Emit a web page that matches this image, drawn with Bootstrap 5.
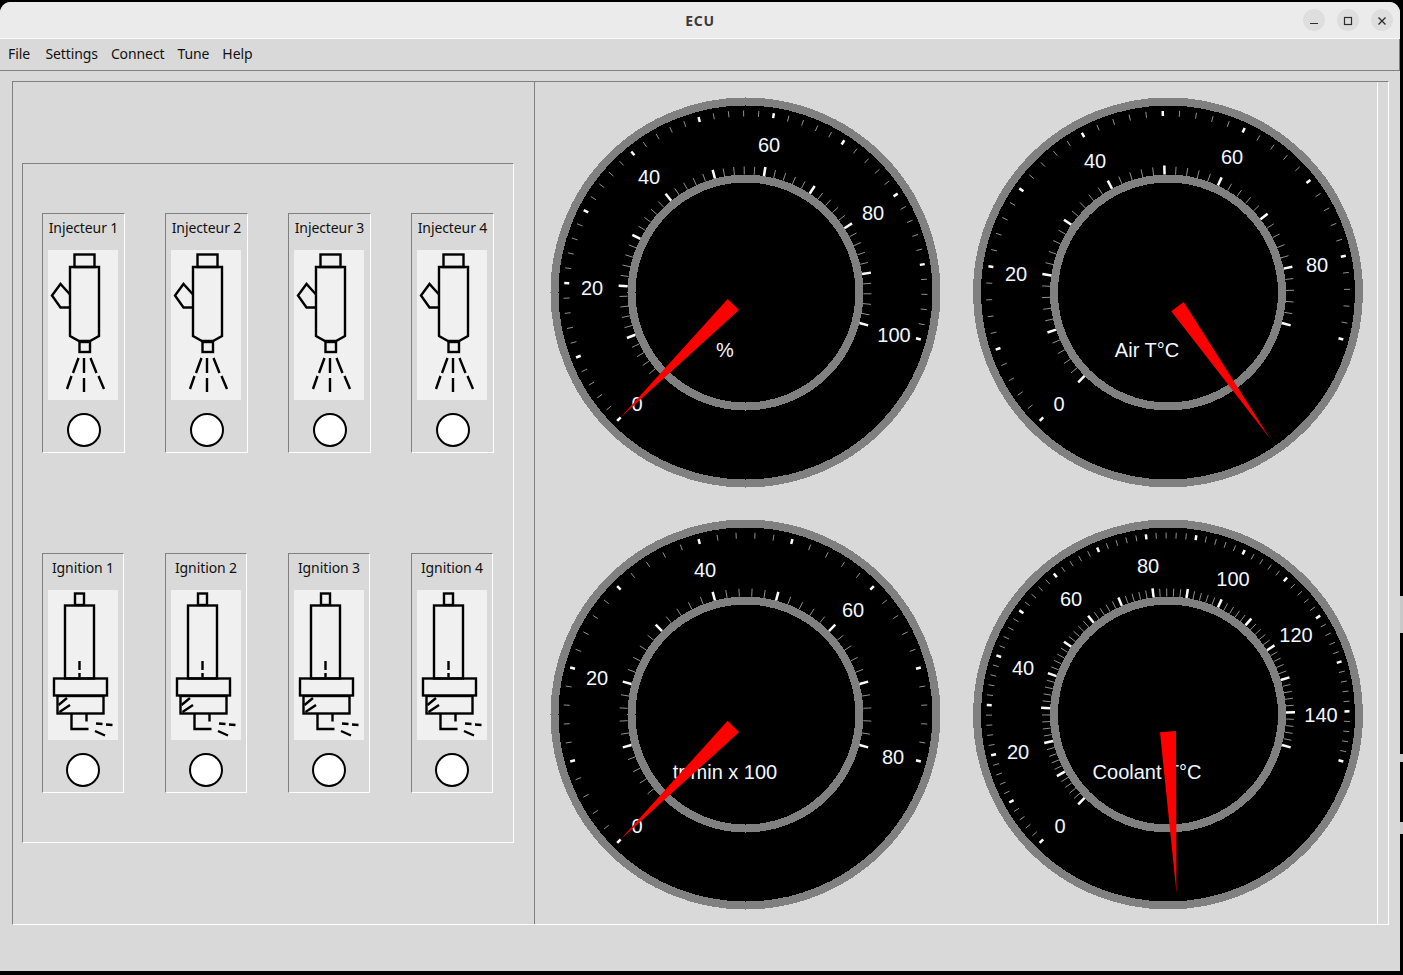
<!DOCTYPE html>
<html lang="en">
<head>
    <meta charset="UTF-8">
    <meta name="viewport" content="width=device-width, initial-scale=1.0">
    <title>ECU</title>
    <link href="https://cdn.jsdelivr.net/npm/bootstrap@5.3.0/dist/css/bootstrap.min.css" rel="stylesheet">
    <style>
        html, body { height: 100%; }
        body { background: #000; font-family: "Noto Sans", sans-serif; font-size: 14px; color: #111; overflow: hidden; }
        .desk { width: 1403px; height: 975px; padding-top: 2px; }
        .app-window { width: 1400px; height: 969px; background: #d9d9d9; border-radius: 11px 11px 0 0; overflow: hidden; }
        .title-bar { height: 37px; background: #ebebeb; border-bottom: 1px solid #f8f8f8; }
        .title-text { left: 0; right: 0; top: 10px; text-align: center; font-weight: 700; font-size: 14px; line-height: 18px; letter-spacing: .7px; color: #3a3a3a; }
        .win-btns { gap: 12px; padding: 7px 7px 0 0; }
        .win-btn { width: 22px; height: 22px; border-radius: 50%; background: #dedede; }
        .menu-row { height: 32px; border-bottom: 1px solid #808080; border-right: 1px solid #808080; padding-left: 8px; gap: 13px; }
        .menu-item { padding: 0; font-size: 14px; line-height: 30px; letter-spacing: -.1px; color: #111; }
        .menu-item:hover { color: #111; }
        .menu-item:first-child { margin-right: 2.4px; }
        .main-frame { width: 1377px; height: 844px; margin: 10px 0 0 12px; border: 1px solid; border-color: #808080 #fff #fff #808080; }
        .left-pane { width: 522px; padding: 81px 0 0 9px; border-right: 1px solid #808080; }
        .io-frame { width: 492px; height: 680px; padding: 49px 0 0 19px; gap: 100px; border: 1px solid; border-color: #808080 #fff #fff #808080; }
        .gap-inj { gap: 40px; }
        .gap-ign { gap: 41px; }
        .io-card { height: 240px; border: 1px solid; border-color: #808080 #fff #fff #808080; }
        .card-inj { width: 83px; }
        .card-ign { width: 82px; }
        .io-label { padding-top: 4px; height: 36px; line-height: 20px; letter-spacing: -.1px; white-space: nowrap; }
        .io-pic { display: block; width: 70px; height: 150px; margin-left: 5px; background: #f0f0f0; }
        .io-lamp { display: block; width: 36px; height: 36px; margin-top: 12px; }
        .card-inj .io-lamp { margin-left: 23px; }
        .card-ign .io-lamp { margin-left: 22px; }
        .gauge-pane { width: 843px; display: grid; grid-template-columns: 421px 421px; grid-template-rows: 421px 421px; border-right: 1px solid #fff; }
        .gauge-pane svg { display: block; width: 421px; height: 421px; }
        .g-face { shape-rendering: crispEdges; fill: #000; stroke: #808080; stroke-width: 8; }
        .g-text { font-family: "Liberation Sans", Arial, sans-serif; font-size: 20px; fill: #f4f8ff; text-anchor: middle; }
        .g-needle { fill: #f00; }
        .tick-major { stroke: #fff; stroke-width: 2.5; }
        .tick-minor { stroke: #a0a0a0; stroke-width: .9; }
        .pic-line { fill: none; stroke: #000; stroke-width: 2.4; }
        .edge-strip { width: 3px; }
        .edge-a, .edge-b, .edge-c { background: #c8c8c8; }
        .edge-a { height: 37px; margin-top: 594px; }
        .edge-b { height: 8px; margin-top: 121px; }
        .edge-c { height: 12px; margin-top: 60px; }
    </style>
</head>
<body>
    <svg width="0" height="0" class="d-block position-absolute">
        <symbol id="pic-injector" viewBox="0 0 70 150">
            <g class="pic-line">
                <rect x="26.5" y="4.5" width="20" height="12.5"/>
                <path d="M22 17H51V86L42 91H31L22 86Z"/>
                <rect x="31.5" y="92" width="10.5" height="10"/>
                <path d="M22 44.5L12.5 34L4 45.5L12.5 57.5H22"/>
                <path d="M36 108V123M36 128V142M30.5 108L25 123M23.5 126L19 139M42.5 108L48.5 123M50.5 126L56 139"/>
            </g>
        </symbol>
        <symbol id="pic-ignition" viewBox="0 0 70 150">
            <g class="pic-line">
                <rect x="27" y="3.5" width="9" height="11.5"/>
                <rect x="17" y="15.5" width="29" height="73"/>
                <rect x="6" y="88.5" width="53" height="17"/>
                <rect x="9.5" y="106" width="46" height="17.5"/>
                <path d="M10.5 115L19 108M11.5 122L22 115M23.5 124V139H40.5M38.5 124V131.5M31.5 71V80M31.5 83V87"/>
                <path d="M48 133.5L54.5 134M58 134.5L64.5 135M47 141L57 145.5"/>
            </g>
        </symbol>
        <symbol id="pic-lamp" viewBox="0 0 36 36">
            <circle cx="18" cy="18" r="16" fill="#fff" stroke="#000" stroke-width="2"/>
        </symbol>
    </svg>

    <div class="desk d-flex">
        <div class="app-window">
            <!-- Barre de titre -->
            <div class="title-bar position-relative d-flex justify-content-end">
                <div class="title-text position-absolute">ECU</div>
                <div class="win-btns d-flex">
                    <div class="win-btn"><svg width="22" height="22" viewBox="0 0 22 22"><path d="M7 13.5H15" stroke="#2e2e2e" stroke-width="1.2"/></svg></div>
                    <div class="win-btn"><svg width="22" height="22" viewBox="0 0 22 22"><rect x="7.5" y="7.5" width="7" height="7" fill="none" stroke="#2e2e2e" stroke-width="1.2"/></svg></div>
                    <div class="win-btn"><svg width="22" height="22" viewBox="0 0 22 22"><path d="M7.5 7.5L14.5 14.5M14.5 7.5L7.5 14.5" stroke="#2e2e2e" stroke-width="1.4"/></svg></div>
                </div>
            </div>

            <!-- Menu -->
            <nav class="nav menu-row">
                <a class="nav-link menu-item" href="#">File</a>
                <a class="nav-link menu-item" href="#">Settings</a>
                <a class="nav-link menu-item" href="#">Connect</a>
                <a class="nav-link menu-item" href="#">Tune</a>
                <a class="nav-link menu-item" href="#">Help</a>
            </nav>

            <div class="main-frame d-flex">
                <!-- Injecteurs et allumage -->
                <div class="left-pane">
                    <div class="io-frame d-flex flex-column">
                        <div class="d-flex gap-inj">
                            <div class="io-card card-inj"><div class="io-label text-center">Injecteur 1</div><svg class="io-pic"><use href="#pic-injector"/></svg><svg class="io-lamp"><use href="#pic-lamp"/></svg></div>
                            <div class="io-card card-inj"><div class="io-label text-center">Injecteur 2</div><svg class="io-pic"><use href="#pic-injector"/></svg><svg class="io-lamp"><use href="#pic-lamp"/></svg></div>
                            <div class="io-card card-inj"><div class="io-label text-center">Injecteur 3</div><svg class="io-pic"><use href="#pic-injector"/></svg><svg class="io-lamp"><use href="#pic-lamp"/></svg></div>
                            <div class="io-card card-inj"><div class="io-label text-center">Injecteur 4</div><svg class="io-pic"><use href="#pic-injector"/></svg><svg class="io-lamp"><use href="#pic-lamp"/></svg></div>
                        </div>
                        <div class="d-flex gap-ign">
                            <div class="io-card card-ign"><div class="io-label text-center">Ignition 1</div><svg class="io-pic"><use href="#pic-ignition"/></svg><svg class="io-lamp"><use href="#pic-lamp"/></svg></div>
                            <div class="io-card card-ign"><div class="io-label text-center">Ignition 2</div><svg class="io-pic"><use href="#pic-ignition"/></svg><svg class="io-lamp"><use href="#pic-lamp"/></svg></div>
                            <div class="io-card card-ign"><div class="io-label text-center">Ignition 3</div><svg class="io-pic"><use href="#pic-ignition"/></svg><svg class="io-lamp"><use href="#pic-lamp"/></svg></div>
                            <div class="io-card card-ign"><div class="io-label text-center">Ignition 4</div><svg class="io-pic"><use href="#pic-ignition"/></svg><svg class="io-lamp"><use href="#pic-lamp"/></svg></div>
                        </div>
                    </div>
                </div>

                <!-- Cadrans (coordonnees du viewBox = coordonnees de la fenetre) -->
                <div class="gauge-pane">
                    <svg viewBox="535 82 421 421" class="gauge" data-cx="745.5" data-cy="292.5" data-majors="10">
                        <circle class="g-face" cx="745.5" cy="292.5" r="191"/>
                        <circle class="g-face" cx="745.5" cy="292.5" r="114"/>
                        <g class="ticks"></g>
                        <text class="g-text" x="637" y="411">0</text>
                        <text class="g-text" x="592" y="295">20</text>
                        <text class="g-text" x="649" y="184">40</text>
                        <text class="g-text" x="769" y="152">60</text>
                        <text class="g-text" x="873" y="220">80</text>
                        <text class="g-text" x="894" y="342">100</text>
                        <text class="g-text" x="725" y="357">%</text>
                        <polygon class="g-needle" points="727.7,299 739,310 620,418"/>
                    </svg>
                    <svg viewBox="956 82 421 421" class="gauge" data-cx="1168" data-cy="292.5" data-majors="9">
                        <circle class="g-face" cx="1168" cy="292.5" r="191"/>
                        <circle class="g-face" cx="1168" cy="292.5" r="114"/>
                        <g class="ticks"></g>
                        <text class="g-text" x="1059" y="411">0</text>
                        <text class="g-text" x="1016" y="281">20</text>
                        <text class="g-text" x="1095" y="168">40</text>
                        <text class="g-text" x="1232" y="164">60</text>
                        <text class="g-text" x="1317" y="272">80</text>
                        <text class="g-text" x="1147" y="357">Air T°C</text>
                        <polygon class="g-needle" points="1171.3,311.3 1183.7,302 1270,438.5"/>
                    </svg>
                    <svg viewBox="535 503 421 421" class="gauge" data-cx="745.5" data-cy="714.5" data-majors="8">
                        <circle class="g-face" cx="745.5" cy="714.5" r="191"/>
                        <circle class="g-face" cx="745.5" cy="714.5" r="114"/>
                        <g class="ticks"></g>
                        <text class="g-text" x="637" y="833">0</text>
                        <text class="g-text" x="597" y="685">20</text>
                        <text class="g-text" x="705" y="577">40</text>
                        <text class="g-text" x="853" y="617">60</text>
                        <text class="g-text" x="893" y="764">80</text>
                        <text class="g-text" x="725" y="779">tr/min x 100</text>
                        <polygon class="g-needle" points="727.7,720.7 739,732.3 620,840"/>
                    </svg>
                    <svg viewBox="956 503 421 421" class="gauge" data-cx="1168" data-cy="714.5" data-majors="15">
                        <circle class="g-face" cx="1168" cy="714.5" r="191"/>
                        <circle class="g-face" cx="1168" cy="714.5" r="114"/>
                        <g class="ticks"></g>
                        <text class="g-text" x="1060" y="833">0</text>
                        <text class="g-text" x="1018" y="759">20</text>
                        <text class="g-text" x="1023" y="675">40</text>
                        <text class="g-text" x="1071" y="606">60</text>
                        <text class="g-text" x="1148" y="573">80</text>
                        <text class="g-text" x="1233" y="586">100</text>
                        <text class="g-text" x="1296" y="642">120</text>
                        <text class="g-text" x="1321" y="722">140</text>
                        <text class="g-text" x="1147" y="779">Coolant T°C</text>
                        <polygon class="g-needle" points="1160,732.3 1176,731 1176.5,893"/>
                    </svg>
                </div>
            </div>
        </div>
        <div class="edge-strip">
            <div class="edge-a"></div>
            <div class="edge-b"></div>
            <div class="edge-c"></div>
        </div>
    </div>

    <script src="https://cdn.jsdelivr.net/npm/bootstrap@5.3.0/dist/js/bootstrap.bundle.min.js"></script>
    <script>
        // Graduations : -135 a +105 degres depuis le haut, 5 subdivisions par graduation majeure
        const SVG_NS = 'http://www.w3.org/2000/svg';
        const START = -135;
        const SWEEP = 240;

        function addTick(group, cx, cy, angle, r1, r2, major) {
            const rad = angle * Math.PI / 180;
            const line = document.createElementNS(SVG_NS, 'line');
            line.setAttribute('x1', (cx + r1 * Math.sin(rad)).toFixed(2));
            line.setAttribute('y1', (cy - r1 * Math.cos(rad)).toFixed(2));
            line.setAttribute('x2', (cx + r2 * Math.sin(rad)).toFixed(2));
            line.setAttribute('y2', (cy - r2 * Math.cos(rad)).toFixed(2));
            line.setAttribute('class', major ? 'tick-major' : 'tick-minor');
            group.appendChild(line);
        }

        document.querySelectorAll('.gauge').forEach(gauge => {
            const cx = parseFloat(gauge.dataset.cx);
            const cy = parseFloat(gauge.dataset.cy);
            const steps = parseInt(gauge.dataset.majors) * 5;
            const group = gauge.querySelector('.ticks');
            for (let i = 0; i <= steps; i++) {
                const angle = START + SWEEP * i / steps;
                const major = i % 5 === 0;
                addTick(group, cx, cy, angle, 118, major ? 127 : 126, major);
                addTick(group, cx, cy, angle, major ? 176.5 : 176, major ? 181.5 : 182, major);
            }
        });
    </script>
</body>
</html>
